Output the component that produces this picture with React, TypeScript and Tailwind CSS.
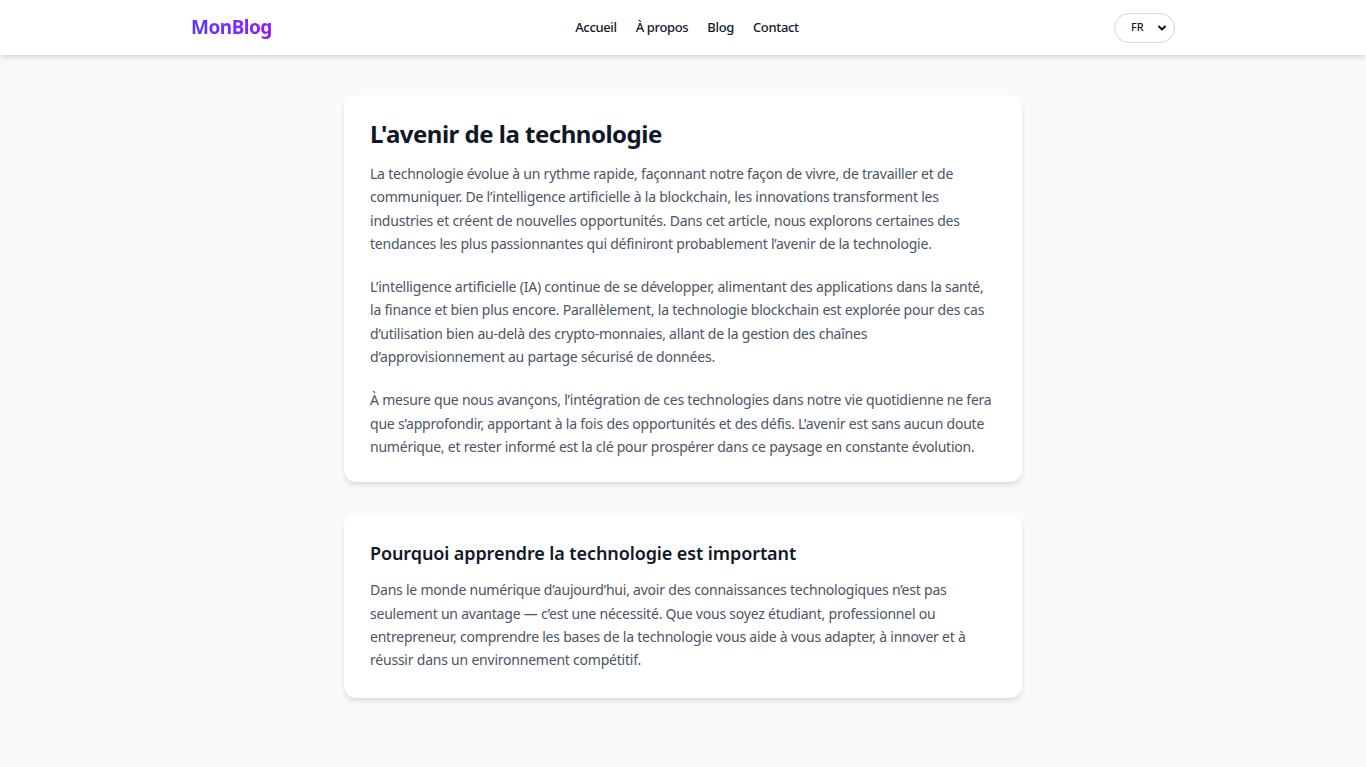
import { ChevronDown } from 'lucide-react'

const font = { fontFamily: '"Noto Sans", "Open Sans", sans-serif' }

function Header() {
    return (
        <header className="bg-white shadow-md">
            <div className="max-w-5xl mx-auto px-5 h-[55px] flex items-center justify-between">
                <a href="#" className="text-[19px] font-bold tracking-[-0.5px] bg-gradient-to-r from-indigo-600 to-purple-600 bg-clip-text text-transparent">
                    MonBlog
                </a>
                <nav className="flex items-center gap-[19px] text-[13px] font-medium tracking-[-0.35px] text-gray-900 -ml-3">
                    <a href="#">Accueil</a>
                    <a href="#">À propos</a>
                    <a href="#">Blog</a>
                    <a href="#">Contact</a>
                </nav>
                <div className="relative">
                    <select className="appearance-none w-[61px] h-[30px] rounded-full border border-gray-300 bg-white pl-4 text-[11px] font-medium text-gray-900 outline-none">
                        <option>FR</option>
                        <option>EN</option>
                    </select>
                    <ChevronDown className="absolute right-[7px] top-[9px] w-3 h-3 text-gray-900 pointer-events-none" strokeWidth={4} />
                </div>
            </div>
        </header>
    )
}

export default function App() {
    return (
        <div className="min-h-screen bg-gray-50" style={font}>
            <Header />
            <main className="max-w-[678px] mx-auto pt-10 pb-16 space-y-8">
                <article className="bg-white rounded-xl shadow-md px-[26px] pt-[23px] pb-6">
                    <h1 className="text-2xl font-bold tracking-[-0.5px] text-gray-900 leading-8 mb-3">L'avenir de la technologie</h1>
                    <div className="space-y-5 text-sm tracking-[-0.22px] text-gray-600 leading-[23.3px]">
                        <p>
                            La technologie évolue à un rythme rapide, façonnant notre façon de vivre, de travailler et de communiquer. De l’intelligence artificielle à la blockchain, les innovations transforment les industries et créent de nouvelles opportunités. Dans cet article, nous explorons certaines des tendances les plus passionnantes qui définiront probablement l’avenir de la technologie.
                        </p>
                        <p>
                            L’intelligence artificielle (IA) continue de se développer, alimentant des applications dans la santé, la finance et bien plus encore. Parallèlement, la technologie blockchain est explorée pour des cas d’utilisation bien au-delà des crypto-monnaies, allant de la gestion des chaînes d’approvisionnement au partage sécurisé de données.
                        </p>
                        <p>
                            À mesure que nous avançons, l’intégration de ces technologies dans notre vie quotidienne ne fera que s’approfondir, apportant à la fois des opportunités et des défis. L’avenir est sans aucun doute numérique, et rester informé est la clé pour prospérer dans ce paysage en constante évolution.
                        </p>
                    </div>
                </article>
                <section className="bg-white rounded-xl shadow-md px-[26px] pt-[25px] pb-[27px]">
                    <h2 className="text-lg font-semibold tracking-[-0.1px] text-gray-900 leading-7 mb-[11px]">Pourquoi apprendre la technologie est important</h2>
                    <p className="text-sm tracking-[-0.22px] text-gray-600 leading-[23.3px]">
                        Dans le monde numérique d’aujourd’hui, avoir des connaissances technologiques n’est pas seulement un avantage — c’est une nécessité. Que vous soyez étudiant, professionnel ou entrepreneur, comprendre les bases de la technologie vous aide à vous adapter, à innover et à réussir dans un environnement compétitif.
                    </p>
                </section>
            </main>
        </div>
    )
}
